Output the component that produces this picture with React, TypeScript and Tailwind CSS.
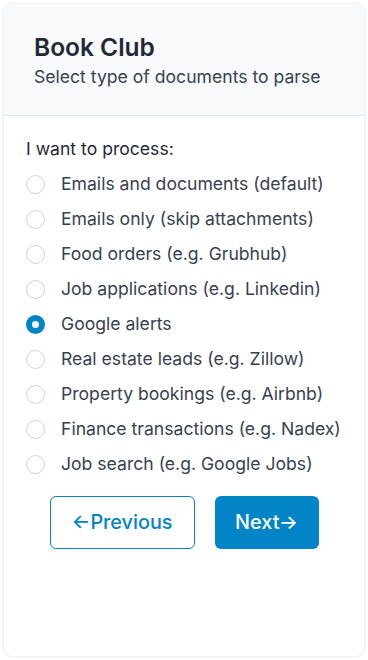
import React, { useState } from "react"

const options = [
  "Emails and documents (default)",
  "Emails only (skip attachments)",
  "Food orders (e.g. Grubhub)",
  "Job applications (e.g. Linkedin)",
  "Google alerts",
  "Real estate leads (e.g. Zillow)",
  "Property bookings (e.g. Airbnb)",
  "Finance transactions (e.g. Nadex)",
  "Job search (e.g. Google Jobs)",
]

export default function App () {
  const [selected, setSelected] = useState(4)

  return (
    <div className="w-[368px] h-[660px] bg-white p-[4px] font-['Inter',sans-serif]">
      <div className="h-full rounded-lg bg-white shadow-[0_0_3px_rgba(0,0,0,0.15)] flex flex-col overflow-hidden">
        <div className="bg-[#f8fafc] border-b border-[#e5e7eb] px-[30px] pt-[27px] pb-[25px]">
          <h1 className="text-[24.5px] leading-[32px] font-semibold text-[#1f2937]">Book Club</h1>
          <p className="text-[17.6px] leading-[26px] text-[#374151] mt-[1px]">Select type of documents to parse</p>
        </div>
        <div className="px-[22px] pt-[20px]">
          <div className="text-[17.6px] leading-[26px] text-[#1f2937]">I want to process:</div>
          <div className="flex flex-col mt-[9px] gap-[9px]">
            {options.map((o, i) => {
              const on = i === selected
              return (
                <label key={o} className="flex items-center gap-[16px] cursor-pointer" onClick={() => setSelected(i)}>
                  <span className={on
                    ? "w-[19px] h-[19px] rounded-full border-[6px] border-[#0284c7] bg-white"
                    : "w-[19px] h-[19px] rounded-full border border-[#d1d5db] bg-white"} />
                  <span className="text-[17.6px] leading-[26px] text-[#374151]">{o}</span>
                </label>
              )
            })}
          </div>
          <div className="flex justify-center gap-[20px] mt-[19px]">
            <button className="w-[145px] h-[53px] rounded-md border border-[#0284c7] text-[#0284c7] text-[19.8px] font-medium bg-white">←Previous</button>
            <button className="w-[104px] h-[53px] rounded-md bg-[#0284c7] text-white text-[19.8px] font-medium">Next→</button>
          </div>
        </div>
      </div>
    </div>
  )
}
